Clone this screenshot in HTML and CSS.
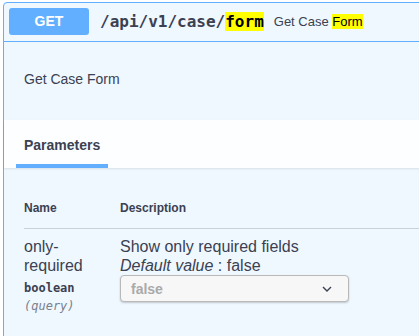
FILE: index.html
```html
<!DOCTYPE html>
<html lang="en">
<head>
<meta charset="UTF-8">
<meta name="viewport" content="width=device-width, initial-scale=1.0">
<title>GET /api/v1/case/form</title>
<link rel="stylesheet" href="styles.css">
</head>
<body>
<div class="opblock">
    <div class="summary">
        <span class="method">GET</span>
        <span class="path">/api/v1/case/<mark>form</mark></span>
        <span class="summary-desc">Get Case <mark>Form</mark></span>
    </div>
    <div class="description">
        <p>Get Case Form</p>
    </div>
    <div class="section-header">
        <div class="tab">Parameters</div>
    </div>
    <div class="table-container">
        <table class="params">
            <thead>
                <tr>
                    <th class="col-name">Name</th>
                    <th>Description</th>
                </tr>
            </thead>
            <tbody>
                <tr>
                    <td class="col-name">
                        <div class="param-name">only-<br>required</div>
                        <div class="param-type">boolean</div>
                        <div class="param-in">(query)</div>
                    </td>
                    <td>
                        <div class="param-desc">Show only required fields</div>
                        <div class="param-default"><i>Default value</i> : false</div>
                        <div class="select">
                            <span>false</span>
                            <svg width="10" height="6" viewBox="0 0 10 6"><path d="M1 1l4 4 4-4" fill="none" stroke="#3b4151" stroke-width="1.4"/></svg>
                        </div>
                    </td>
                </tr>
            </tbody>
        </table>
    </div>
</div>
</body>
</html>
```

FILE: styles.css
```css
body {
    margin: 0;
    padding: 2px 0 0 3px;
    overflow: hidden;
    font-family: "Liberation Sans", Arial, sans-serif;
    color: #3b4151;
    background: #fff;
}
mark {
    background: #ffff00;
    color: #000;
}
.opblock {
    width: 600px;
    height: 400px;
    background: #eff7ff;
    border: 1px solid #61affe;
    border-radius: 4px;
}
.summary {
    display: flex;
    align-items: center;
    padding: 5px 5px 6px;
    border-bottom: 1px solid #61affe;
}
.method {
    width: 80px;
    height: 27px;
    line-height: 27px;
    text-align: center;
    background: #61affe;
    color: #fff;
    font-weight: bold;
    font-size: 14px;
    border-radius: 3px;
}
.path {
    padding: 0 10px 0 11px;
    font-family: "DejaVu Sans Mono", monospace;
    font-weight: bold;
    font-size: 16px;
}
.summary-desc {
    font-size: 13px;
}
.description {
    padding: 29px 20px 33px;
}
.description p {
    margin: 0;
    font-size: 14px;
    line-height: 16px;
}
.section-header {
    height: 48px;
    padding-left: 12px;
    background: rgba(255, 255, 255, 0.8);
    box-shadow: 0 1px 2px rgba(0, 0, 0, 0.1);
    margin-bottom: 1px;
}
.tab {
    display: inline-block;
    width: 76px;
    padding: 15px 8px 0;
    font-size: 14px;
    font-weight: bold;
    line-height: 20px;
    border-bottom: 4px solid #61affe;
    padding-bottom: 9px;
}
.table-container {
    padding: 20px 0 0 20px;
}
.params {
    width: 580px;
    border-collapse: collapse;
}
.params th {
    text-align: left;
    font-size: 12px;
    font-weight: bold;
    line-height: 15px;
    padding: 12px 0;
    border-bottom: 1px solid #c9d0da;
}
.params td {
    vertical-align: top;
    padding: 9px 0;
}
.col-name {
    width: 96px;
}
.param-name {
    font-size: 16px;
    line-height: 18.5px;
}
.param-type {
    font-family: "DejaVu Sans Mono", monospace;
    font-size: 12px;
    font-weight: bold;
    line-height: 18px;
    margin-top: 4px;
}
.param-in {
    font-family: "DejaVu Sans Mono", monospace;
    font-size: 12px;
    font-style: italic;
    color: #7a808c;
    line-height: 18px;
}
.param-desc, .param-default {
    font-size: 16px;
    line-height: 18.5px;
}
.select {
    display: flex;
    align-items: center;
    justify-content: space-between;
    box-sizing: border-box;
    width: 229px;
    height: 27px;
    padding: 0 16px 0 10px;
    background: #f7f7f7;
    border: 1px solid #b9b9b9;
    border-radius: 4px;
    box-shadow: 0 1px 2px rgba(0, 0, 0, 0.2);
    font-size: 14px;
    font-weight: bold;
    color: #aaa;
}
```
